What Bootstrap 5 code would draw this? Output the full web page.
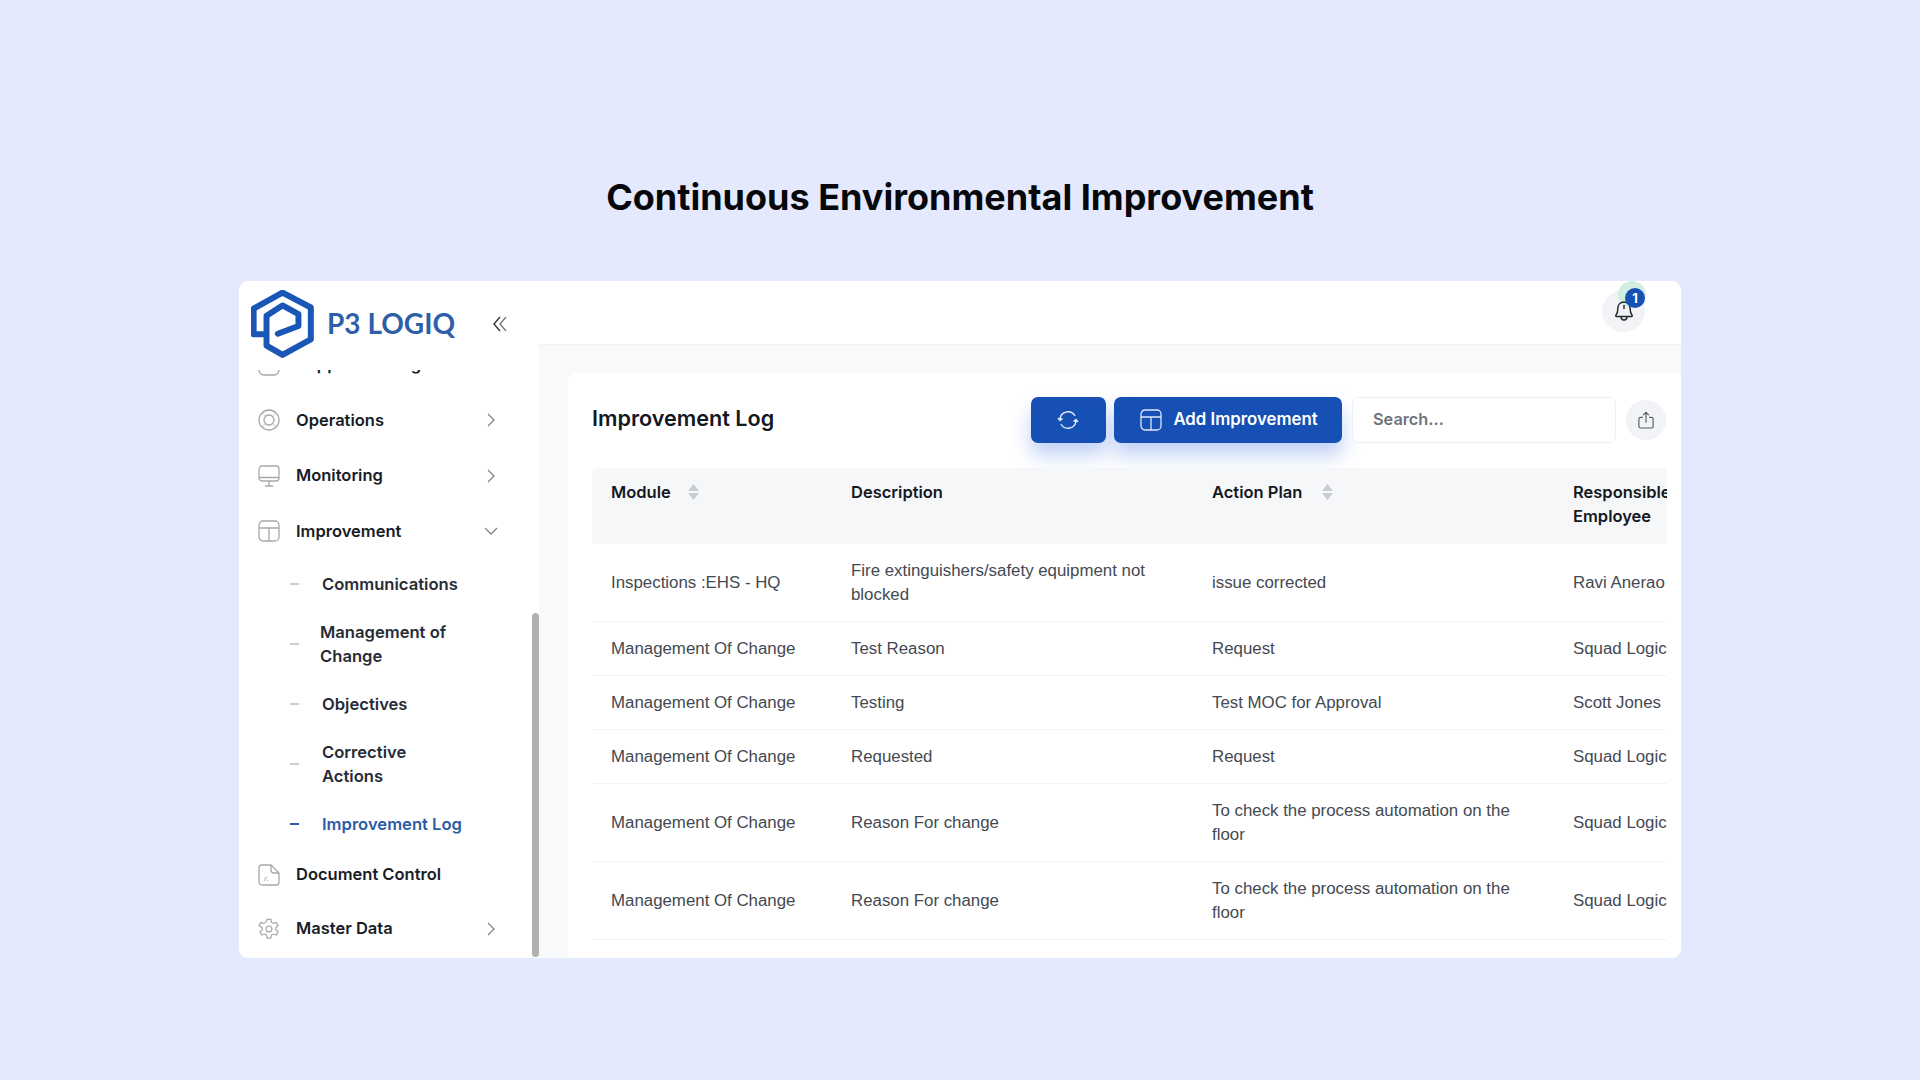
<!DOCTYPE html>
<html lang="en">
<head>
  <meta charset="UTF-8">
  <title>Continuous Environmental Improvement</title>
  <link href="https://cdn.jsdelivr.net/npm/bootstrap@5.3.0/dist/css/bootstrap.min.css" rel="stylesheet">
  <style>
    body { background: #e4e9fd; font-family: "Inter", "Liberation Sans", sans-serif; min-height: 1080px; }
    .page-title { font-size: 36px; font-weight: 700; color: #06080c; padding-top: 174px; margin-bottom: 61px; line-height: 46px; }
    .app-window { width: 1442px; height: 677px; border-radius: 9px; overflow: hidden; background: #f8f9fb; }

    .sidebar { width: 300px; background: #fff; position: relative; flex-shrink: 0; }
    .brand { height: 89px; padding: 0 32px 3px 12px; }
    .brand-name { font-family: "Lato", sans-serif; font-size: 28px; font-weight: 700; color: #2f5fa9; margin: 0 0 2px 12px; }
    .side-nav { height: 588px; overflow: hidden; }
    .side-list { margin-top: -33px; padding-left: 19px; padding-right: 44px; }
    .side-item { height: 55.5px; font-size: 16.5px; font-weight: 600; color: #181c26; }
    .side-item.doc { height: 53px; }
    .side-item svg.ico { width: 22px; height: 22px; margin-right: 16px; flex-shrink: 0; }
    .chev-down { margin-right: -3px; }
    .sub-list { padding-top: 1px; }
    .sub-item { font-size: 16.6px; font-weight: 600; color: #262b36; line-height: 24px; padding: 12px 0 12px 32px; }
    .sub-item .dash { width: 9px; height: 2px; background: #c9ccd1; margin-right: 23px; flex-shrink: 0; }
    .sub-item.tight .dash { margin-right: 21px; }
    .sub-item.active { color: #2b5ba8; }
    .sub-item.active .dash { background: #2b5ba8; }
    .thumb { position: absolute; right: 0; top: 332px; width: 7px; height: 344px; border-radius: 4px; background: #b1b1b1; }

    .topbar { height: 64px; background: #fff; border-bottom: 1px solid #f1f2f4; padding-right: 36px; flex-shrink: 0; }
    .bell-wrap { position: relative; width: 43px; height: 42px; border-radius: 50%; background: #f2f3f6; margin-top: 9px; }
    .bell-icon { position: relative; margin-top: -2px; }
    .bell-halo { position: absolute; left: 16px; top: -9px; width: 28px; height: 27px; border-radius: 50%; background: #d2eee0; }
    .bell-badge { position: absolute; left: 23px; top: -2px; width: 20px; height: 20px; border-radius: 50%; background: #1650b4; color: #fff; font-size: 13px; font-weight: 700; line-height: 20px; text-align: center; }

    .log-card { background: #fff; margin: 28px 0 0 29px; border-radius: 9px 0 0 0; padding: 24px 14px 0 24px; flex: 1; min-width: 0; }
    .log-title { font-size: 21.6px; font-weight: 600; color: #14181f; margin: 0 0 3px; }
    .btn-brand { background: #1650b4; color: #fff; height: 46px; border-radius: 7px; border: 0; font-size: 16.8px; font-weight: 600; box-shadow: 0 12px 20px rgba(40, 100, 220, .3); }
    .btn-brand:hover { background: #1650b4; color: #fff; }
    .btn-refresh { width: 75px; margin-right: 8px; }
    .btn-refresh svg { margin-right: 2px; }
    .btn-add { width: 228px; margin-right: 10px; padding-left: 2px !important; }
    .btn-add svg { margin-right: 11px; }
    .search-box { width: 264px; height: 46px; border: 1px solid #eceef1; border-radius: 7px; font-size: 16.3px; font-weight: 600; padding: 0 0 3px 20px; }
    .search-box::placeholder { color: #6f747c; opacity: 1; }
    .export-btn { width: 40px; height: 40px; border-radius: 50%; background: #f2f3f6; margin-left: 10px; margin-right: 1px; }

    .log-scroll { overflow: hidden; margin-top: 25px; border-radius: 5px 5px 0 0; }
    .log-table { table-layout: fixed; width: 1400px; margin: 0; font-family: "Liberation Sans", Arial, sans-serif; font-size: 16.85px; line-height: 24px; }
    .log-table th { font-family: "Inter", sans-serif; font-size: 16.5px; font-weight: 600; color: #14181f; background: #f6f7f9; padding: 12px 19px 16px; vertical-align: top; border-bottom: 0; }
    .log-table td { color: #444952; padding: 15px 19px 14px; vertical-align: middle; border-bottom: 1px solid #f2f3f5; }
    .sort { display: inline-block; width: 11px; height: 16px; margin-left: 17px; vertical-align: -2px; }
    .sort.wide { margin-left: 20px; }
  </style>
</head>
<body>
  <h1 class="page-title text-center">Continuous Environmental Improvement</h1>

  <div class="app-window mx-auto d-flex">
    <aside class="sidebar d-flex flex-column">
      <div class="brand d-flex align-items-center">
        <svg width="64" height="68" viewBox="7 7 62 66" fill="none" stroke="#1a56b5" stroke-width="5.800" stroke-linejoin="round" stroke-linecap="round">
          <path d="M20 50H9.500V25L37.500 9.500L65 24V55L37.500 70L22 61V32L37.500 22L53 30.500V42L33 49.500"/>
        </svg>
        <span class="brand-name">P3 LOGIQ</span>
        <svg class="ms-auto" width="14" height="16" viewBox="0 0 14 16" fill="none" stroke-width="1.4">
          <path d="M7 1L1 8l6 7" stroke="#33373e"/><path d="M13 1L7 8l6 7" stroke="#777b82"/>
        </svg>
      </div>
      <nav class="side-nav">
        <ul class="side-list list-unstyled mb-0">
          <li class="side-item d-flex align-items-center">
            <svg class="ico" viewBox="0 0 22 22" fill="none" stroke="#a4a8ae" stroke-width="1.3"><rect x="1" y="1" width="20" height="20" rx="5"/></svg>
            <span>Supplier Management</span>
          </li>
          <li class="side-item d-flex align-items-center">
            <svg class="ico" viewBox="0 0 22 22" fill="none" stroke="#a4a8ae" stroke-width="1.3"><circle cx="11" cy="11" r="10"/><circle cx="11" cy="11" r="5"/><path d="M4 4l3.500 3.500M18 4l-3.500 3.500M4 18l3.500-3.500M18 18l-3.500-3.500" stroke-width=".6"/></svg>
            <span>Operations</span>
            <svg class="ms-auto" width="8" height="14" viewBox="0 0 8 14" fill="none" stroke="#80858c" stroke-width="1.3"><path d="M1 1l6 6-6 6"/></svg>
          </li>
          <li class="side-item d-flex align-items-center">
            <svg class="ico" viewBox="0 0 22 22" fill="none" stroke="#a4a8ae" stroke-width="1.3"><rect x="1" y="1" width="20" height="15" rx="3"/><path d="M1 12.500h20M11 16v5M7 21h8"/></svg>
            <span>Monitoring</span>
            <svg class="ms-auto" width="8" height="14" viewBox="0 0 8 14" fill="none" stroke="#80858c" stroke-width="1.3"><path d="M1 1l6 6-6 6"/></svg>
          </li>
          <li class="side-item d-flex align-items-center">
            <svg class="ico" viewBox="0 0 22 22" fill="none" stroke="#a4a8ae" stroke-width="1.3"><rect x="1" y="1" width="20" height="20" rx="4"/><path d="M1 8h20M11 8v13"/></svg>
            <span>Improvement</span>
            <svg class="ms-auto chev-down" width="14" height="8" viewBox="0 0 14 8" fill="none" stroke="#80858c" stroke-width="1.3"><path d="M1 1l6 6 6-6"/></svg>
          </li>
          <li class="sub-list">
            <ul class="list-unstyled mb-0">
              <li class="sub-item d-flex align-items-center"><span class="dash"></span><span>Communications</span></li>
              <li class="sub-item tight d-flex align-items-center"><span class="dash"></span><span>Management of<br>Change</span></li>
              <li class="sub-item d-flex align-items-center"><span class="dash"></span><span>Objectives</span></li>
              <li class="sub-item d-flex align-items-center"><span class="dash"></span><span>Corrective<br>Actions</span></li>
              <li class="sub-item active d-flex align-items-center"><span class="dash"></span><span>Improvement Log</span></li>
            </ul>
          </li>
          <li class="side-item doc d-flex align-items-center">
            <svg class="ico" viewBox="0 0 22 22" fill="none" stroke="#a4a8ae" stroke-width="1.3"><path d="M4 1h9l8 8v9a3 3 0 0 1-3 3H4a3 3 0 0 1-3-3V4a3 3 0 0 1 3-3z"/><path d="M13 1v5a3 3 0 0 0 3 3h5"/><path d="M6 17l3-4M6 13.500h.6M9 16.500h.6" stroke-width="1"/></svg>
            <span>Document Control</span>
          </li>
          <li class="side-item d-flex align-items-center">
            <svg class="ico" viewBox="0 0 24 24" fill="none" stroke="#a4a8ae" stroke-width="1.3"><circle cx="12" cy="12" r="3.200"/><path d="M10 1.500h4l.7 3.300 2 1.100 3.200-1 2 3.400-2.500 2.300v2.200l2.500 2.300-2 3.400-3.200-1-2 1.100-.7 3.300h-4l-.7-3.300-2-1.100-3.200 1-2-3.400 2.500-2.300v-2.200L1.100 8.300l2-3.400 3.200 1 2-1.100z"/></svg>
            <span>Master Data</span>
            <svg class="ms-auto" width="8" height="14" viewBox="0 0 8 14" fill="none" stroke="#80858c" stroke-width="1.3"><path d="M1 1l6 6-6 6"/></svg>
          </li>
        </ul>
      </nav>
      <div class="thumb"></div>
    </aside>

    <main class="flex-grow-1 d-flex flex-column" style="min-width:0">
      <header class="topbar d-flex justify-content-end">
        <div class="bell-wrap d-flex align-items-center justify-content-center">
          <span class="bell-halo"></span>
          <svg class="bell-icon" width="22" height="24" viewBox="0 0 22 24" fill="none" stroke="#23272e" stroke-width="1.5"><path d="M3 17c1.500-1.500 1.800-3 1.800-6 0-4 2.500-7 6.200-7s6.200 3 6.200 7c0 3 .3 4.500 1.800 6 .6.700.2 1.500-.6 1.500H3.600c-.8 0-1.200-.8-.6-1.500z"/><path d="M8 18.500c0 2 1.300 3.500 3 3.500s3-1.500 3-3.500M11 7v4"/></svg>
          <span class="bell-badge">1</span>
        </div>
      </header>

      <section class="log-card d-flex flex-column">
        <div class="d-flex align-items-center">
          <h2 class="log-title me-auto">Improvement Log</h2>
          <button class="btn btn-brand btn-refresh d-flex align-items-center justify-content-center p-0">
            <svg width="22" height="22" viewBox="0 0 22 22" fill="none" stroke="#dfe8fa" stroke-width="1.4"><path d="M3 10a8 8 0 0 1 15-3M19 12a8 8 0 0 1-15 3"/><path d="M1 9l2 2.500L5.500 9.500M21 13l-2-2.500L16.500 12.500" fill="#dfe8fa"/></svg>
          </button>
          <button class="btn btn-brand btn-add d-flex align-items-center justify-content-center p-0">
            <svg width="22" height="22" viewBox="0 0 22 22" fill="none" stroke="#dfe8fa" stroke-width="1.3"><rect x="1" y="1" width="20" height="20" rx="4"/><path d="M1 8h20M11 8v13"/></svg>
            Add Improvement
          </button>
          <input class="form-control search-box" type="text" placeholder="Search...">
          <div class="export-btn d-flex align-items-center justify-content-center">
            <svg width="16" height="20" viewBox="0 0 18 20" fill="none" stroke="#565b63" stroke-width="1.3"><path d="M5.500 7H3a2 2 0 0 0-2 2v8a2 2 0 0 0 2 2h12a2 2 0 0 0 2-2V9a2 2 0 0 0-2-2h-2.500M9 13V1.500M5.800 4.500L9 1.300l3.200 3.200"/></svg>
          </div>
        </div>

        <div class="log-scroll">
          <table class="table log-table">
            <colgroup><col style="width:240px"><col style="width:361px"><col style="width:361px"><col style="width:438px"></colgroup>
            <thead>
              <tr>
                <th>Module<svg class="sort" viewBox="0 0 11 16" fill="#c9cdd3"><path d="M5.500 0L11 7H0zM5.500 16L0 9h11z"/></svg></th>
                <th>Description</th>
                <th>Action Plan<svg class="sort wide" viewBox="0 0 11 16" fill="#c9cdd3"><path d="M5.500 0L11 7H0zM5.500 16L0 9h11z"/></svg></th>
                <th>Responsible<br>Employee</th>
              </tr>
            </thead>
            <tbody>
              <tr><td>Inspections :EHS - HQ</td><td>Fire extinguishers/safety equipment not blocked</td><td>issue corrected</td><td>Ravi Anerao</td></tr>
              <tr><td>Management Of Change</td><td>Test Reason</td><td>Request</td><td>Squad Logic</td></tr>
              <tr><td>Management Of Change</td><td>Testing</td><td>Test MOC for Approval</td><td>Scott Jones</td></tr>
              <tr><td>Management Of Change</td><td>Requested</td><td>Request</td><td>Squad Logic</td></tr>
              <tr><td>Management Of Change</td><td>Reason For change</td><td>To check the process automation on the floor</td><td>Squad Logic</td></tr>
              <tr><td>Management Of Change</td><td>Reason For change</td><td>To check the process automation on the floor</td><td>Squad Logic</td></tr>
            </tbody>
          </table>
        </div>
      </section>
    </main>
  </div>

  <script src="https://cdn.jsdelivr.net/npm/bootstrap@5.3.0/dist/js/bootstrap.bundle.min.js"></script>
</body>
</html>
